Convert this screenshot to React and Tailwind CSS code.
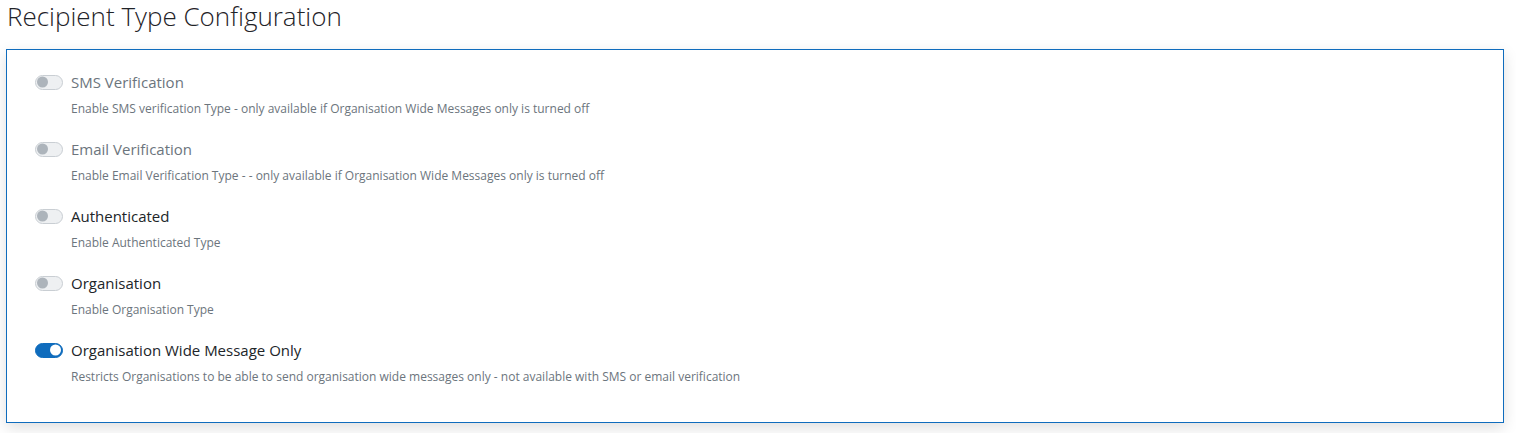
import { useState } from "react";

const options = [
  {
    id: "sms",
    label: "SMS Verification",
    help: "Enable SMS verification Type - only available if Organisation Wide Messages only is turned off",
    disabled: true,
  },
  {
    id: "email",
    label: "Email Verification",
    help: "Enable Email Verification Type - - only available if Organisation Wide Messages only is turned off",
    disabled: true,
  },
  { id: "auth", label: "Authenticated", help: "Enable Authenticated Type" },
  { id: "org", label: "Organisation", help: "Enable Organisation Type" },
  {
    id: "orgWide",
    label: "Organisation Wide Message Only",
    help: "Restricts Organisations to be able to send organisation wide messages only - not available with SMS or email verification",
  },
];

function Switch({ checked, disabled, onChange }) {
  return (
    <button
      type="button"
      role="switch"
      aria-checked={checked}
      disabled={disabled}
      onClick={onChange}
      className={`relative h-[15px] w-[28px] shrink-0 rounded-full border transition-colors ${
        checked ? "border-[#0f6cbd] bg-[#0f6cbd]" : "border-[#c9ced3] bg-[#eef0f2]"
      }`}
    >
      <span
        className={`absolute top-1/2 h-[11px] w-[11px] -translate-y-1/2 rounded-full ${
          checked ? "left-[14px] bg-white" : "left-[1px] bg-[#adb4bb]"
        }`}
      />
    </button>
  );
}

export default function App() {
  const [values, setValues] = useState({ sms: false, email: false, auth: false, org: false, orgWide: true });

  return (
    <div className="min-h-screen bg-white pl-[6px] pr-[12px]" style={{ fontFamily: "'Open Sans', 'Noto Sans', sans-serif" }}>
      <h1 className="pl-[1px] text-[26px] font-light leading-[33px] text-[#1f2328]">
        Recipient Type Configuration
      </h1>

      <div className="mt-[16px] border border-[#0f6cbd] bg-white px-[28px] pt-[22px] pb-[35px] shadow-[0_5px_14px_rgba(0,0,0,0.13)]">
        <div className="flex flex-col gap-[20px]">
          {options.map((o) => (
            <div key={o.id}>
              <div className="flex items-center gap-[8px]">
                <Switch
                  checked={values[o.id]}
                  disabled={o.disabled}
                  onChange={() => setValues((v) => ({ ...v, [o.id]: !v[o.id] }))}
                />
                <span className={`text-[15px] leading-[20px] ${o.disabled ? "text-[#6c757d]" : "text-[#212529]"}`}>
                  {o.label}
                </span>
              </div>
              <p className="mt-[7px] pl-[36px] text-[12px] leading-[20px] text-[#6c757d]">{o.help}</p>
            </div>
          ))}
        </div>
      </div>
    </div>
  );
}
